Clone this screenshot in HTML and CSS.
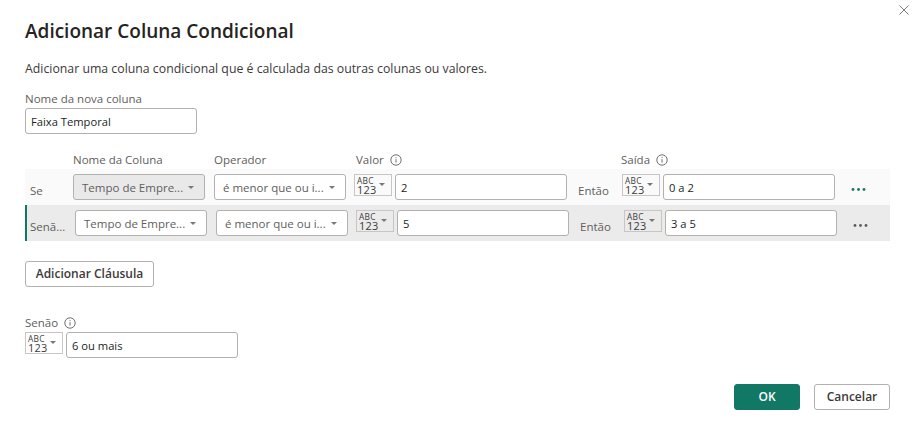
FILE: index.html
```html
<!DOCTYPE html>
<html lang="pt">
<head>
<meta charset="utf-8">
<title>Adicionar Coluna Condicional</title>
<link rel="stylesheet" href="styles.css">
</head>
<body>
<main class="dialog">
  <svg class="close" viewBox="0 0 12 12" width="12" height="12"><path d="M1.5 1.5l9 9M10.5 1.5l-9 9"/></svg>
  <h1 class="title">Adicionar Coluna Condicional</h1>
  <p class="desc">Adicionar uma coluna condicional que é calculada das outras colunas ou valores.</p>
  <div class="label">Nome da nova coluna</div>
  <div class="input name">Faixa Temporal</div>

  <div class="heads">
    <span class="h-col">Nome da Coluna</span>
    <span class="h-op">Operador</span>
    <span class="h-val">Valor <svg class="info" viewBox="0 0 12 12" width="12" height="12"><circle cx="6" cy="6" r="5.2"/><path d="M6 5.2v3.4M6 3.2v1"/></svg></span>
    <span class="h-out">Saída <svg class="info" viewBox="0 0 12 12" width="12" height="12"><circle cx="6" cy="6" r="5.2"/><path d="M6 5.2v3.4M6 3.2v1"/></svg></span>
  </div>

  <div class="row first">
    <span class="row-label">Se</span>
    <div class="select selected"><span>Tempo de Empre...</span><i class="arrow"></i></div>
    <div class="select op"><span>é menor que ou i...</span><i class="arrow"></i></div>
    <div class="type"><span class="abc"><span class="abc-top">ABC</span><span class="abc-num">123</span></span><i class="arrow"></i></div>
    <div class="input val">2</div>
    <span class="then">Então</span>
    <div class="type"><span class="abc"><span class="abc-top">ABC</span><span class="abc-num">123</span></span><i class="arrow"></i></div>
    <div class="input val">0 a 2</div>
    <svg class="dots green" viewBox="0 0 15 3" width="15" height="3"><circle cx="2" cy="1.5" r="1.4"/><circle cx="7.5" cy="1.5" r="1.4"/><circle cx="13" cy="1.5" r="1.4"/></svg>
  </div>
  <div class="row second">
    <span class="row-label">Senã...</span>
    <div class="select"><span>Tempo de Empre...</span><i class="arrow"></i></div>
    <div class="select op"><span>é menor que ou i...</span><i class="arrow"></i></div>
    <div class="type"><span class="abc"><span class="abc-top">ABC</span><span class="abc-num">123</span></span><i class="arrow"></i></div>
    <div class="input val">5</div>
    <span class="then">Então</span>
    <div class="type"><span class="abc"><span class="abc-top">ABC</span><span class="abc-num">123</span></span><i class="arrow"></i></div>
    <div class="input val">3 a 5</div>
    <svg class="dots" viewBox="0 0 15 3" width="15" height="3"><circle cx="2" cy="1.5" r="1.4"/><circle cx="7.5" cy="1.5" r="1.4"/><circle cx="13" cy="1.5" r="1.4"/></svg>
  </div>

  <button class="btn add">Adicionar Cláusula</button>

  <div class="label else-label">Senão <svg class="info" viewBox="0 0 12 12" width="12" height="12"><circle cx="6" cy="6" r="5.2"/><path d="M6 5.2v3.4M6 3.2v1"/></svg></div>
  <div class="else">
    <div class="type"><span class="abc"><span class="abc-top">ABC</span><span class="abc-num">123</span></span><i class="arrow"></i></div>
    <div class="input val">6 ou mais</div>
  </div>

  <div class="actions">
    <button class="btn ok">OK</button>
    <button class="btn cancel">Cancelar</button>
  </div>
</main>
</body>
</html>
```
FILE: styles.css
```css
* { box-sizing: border-box; }
html, body { margin: 0; height: 100%; background: #fff; }
body { font-family: "Open Sans", "Noto Sans", "Liberation Sans", sans-serif; font-size: 11.5px; color: #605e5c; overflow: hidden; }
.dialog { position: relative; width: 918px; height: 437px; padding: 18px 28px 0 25px; }
.close { position: absolute; left: 898px; top: 4px; }
.close path { stroke: #7a7a7a; stroke-width: 1; fill: none; }
.title { margin: 0; font-size: 19px; line-height: 26px; font-weight: 600; color: #252423; }
.desc { margin: 15px 0 0; height: 20px; line-height: 20px; font-size: 12.3px; color: #3b3a39; white-space: nowrap; }
.label { margin-top: 10px; height: 20px; line-height: 20px; }
.input { height: 26px; width: 172px; padding: 0 5px; line-height: 25px; background: #fff; border: 1px solid #b3b0ad; border-radius: 3px; color: #201f1e; font-size: 11.2px; flex: none; }
.val { padding: 0 5px; }
.name { margin-top: -1px; }
.heads { display: flex; height: 20px; margin-top: 16px; line-height: 20px; }
.h-col { margin-left: 48px; width: 141px; }
.h-op { width: 142px; }
.h-val { width: 265px; }
.info { vertical-align: -2px; margin-left: 3px; }
.info circle, .info path { fill: none; stroke: #605e5c; stroke-width: .9; }
.row { display: flex; align-items: flex-start; width: 865px; height: 36px; padding-top: 5px; }
.first { background: #fafafa; margin-top: -1px; }
.second { background: #ebebeb; border-left: 2px solid #117865; }
.row-label { width: 48px; padding: 9px 0 0 5px; line-height: 16px; color: #605e5c; white-space: nowrap; }
.second .row-label { padding-left: 3px; }
.select { display: flex; align-items: center; justify-content: space-between; width: 132px; height: 26px; margin-right: 9px; padding: 0 10px 0 8px; background: #fff; border: 1px solid #b3b0ad; border-radius: 3px; color: #605e5c; white-space: nowrap; flex: none; }
.select.op { margin-right: 8px; }
.selected { background: #e9e9e9; }
.arrow { display: block; width: 0; height: 0; border-left: 3px solid transparent; border-right: 3px solid transparent; border-top: 3px solid #7a7876; }
.type { display: flex; justify-content: space-between; width: 38px; height: 22px; margin-right: 3px; padding: 2px 6px 0 2px; border: 1px solid #c8c6c4; flex: none; }
.type .arrow { margin-top: 6px; }
.abc { display: block; color: #3b3a39; }
.abc-top { display: block; height: 8px; font-size: 8.4px; line-height: 8px; letter-spacing: .25px; }
.abc-num { display: block; height: 9px; font-size: 11px; line-height: 9px; letter-spacing: .2px; }
.then { width: 43px; margin-left: 11px; margin-right: 1px; padding-top: 9px; line-height: 16px; color: #605e5c; flex: none; }
.dots { margin: 14px 0 0 16px; fill: #605e5c; flex: none; }
.dots.green { fill: #117865; }
.btn { display: block; height: 26px; margin: 0; padding: 0 0 2px; background: #fff; border: 1px solid #b3b0ad; border-radius: 3px; font: 600 12px "Open Sans", "Noto Sans", sans-serif; color: #3b3a39; }
.add { width: 129px; margin-top: 20px; }
.else-label { margin-top: 26px; height: 19px; }
.else { display: flex; }
.actions { position: absolute; right: 28px; top: 384px; display: flex; gap: 14px; }
.ok { width: 66px; background: #117865; border-color: #117865; color: #fff; }
.cancel { width: 76px; }
```
